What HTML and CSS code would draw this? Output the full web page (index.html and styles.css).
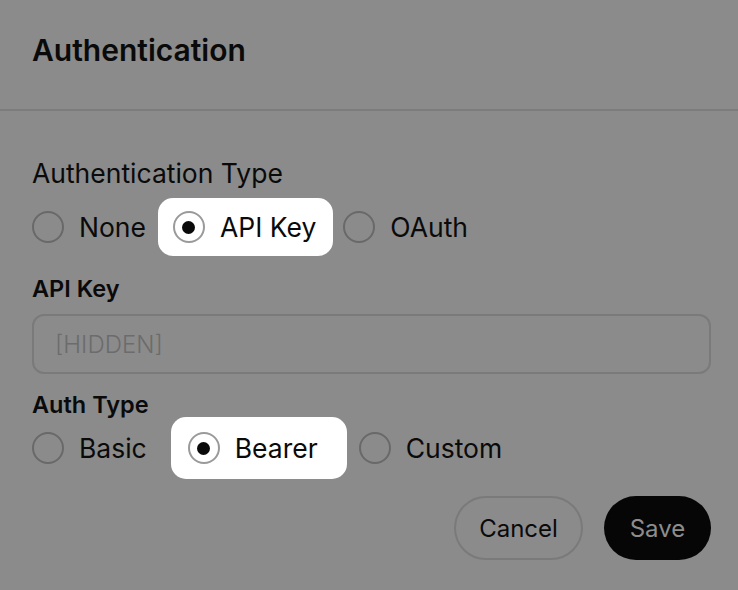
FILE: index.html
```html
<!DOCTYPE html>
<html>
<head>
<meta charset="utf-8">
<link rel="stylesheet" href="styles.css">
</head>
<body>
<div class="dialog">
  <header class="head">
    <h1 class="title">Authentication</h1>
  </header>
  <main class="body">
    <div class="section-label">Authentication Type</div>
    <div class="radio-row row1">
      <label class="opt"><span class="circle"></span><span class="txt">None</span></label>
      <label class="opt selected"><span class="circle"><span class="dot"></span></span><span class="txt">API Key</span></label>
      <label class="opt"><span class="circle"></span><span class="txt">OAuth</span></label>
    </div>
    <div class="field-label">API Key</div>
    <div class="input"><span class="placeholder">[HIDDEN]</span></div>
    <div class="field-label second">Auth Type</div>
    <div class="radio-row row2">
      <label class="opt"><span class="circle"></span><span class="txt">Basic</span></label>
      <label class="opt selected"><span class="circle"><span class="dot"></span></span><span class="txt">Bearer</span></label>
      <label class="opt"><span class="circle"></span><span class="txt">Custom</span></label>
    </div>
    <div class="actions">
      <button class="btn cancel">Cancel</button>
      <button class="btn save">Save</button>
    </div>
  </main>
</div>
</body>
</html>
```
FILE: styles.css
```css
* { box-sizing: border-box; }
html, body {
  margin: 0;
  padding: 0;
  background: #8b8b8b;
  font-family: Inter, "Noto Sans", sans-serif;
  color: #0a0a0a;
}
.dialog {
  width: 738px;
  height: 590px;
  overflow: hidden;
}
.head {
  height: 111px;
  border-bottom: 2px solid #7c7c7c;
  padding: 31px 32px 0;
}
.title {
  margin: 0;
  font-size: 30px;
  font-weight: 600;
  line-height: 38px;
  letter-spacing: 0;
}
.body {
  padding: 0 27px 0 32px;
}
.section-label {
  margin-top: 47px;
  font-size: 26.5px;
  line-height: 30px;
}
.radio-row {
  display: flex;
  align-items: center;
  height: 58px;
  margin-top: 10px;
}
.row1 { gap: 27px; }
.row2 { gap: 41px; margin-top: -3px; height: 62px; }
.opt {
  display: flex;
  align-items: center;
  gap: 15px;
  font-size: 26.5px;
  height: 58px;
}
.row2 .opt { height: 62px; }
.opt.selected {
  background: #ffffff;
  border-radius: 15px;
  padding: 0 17px 0 15px;
  margin: 0 -17px 0 -15px;
}
.row2 .opt.selected {
  padding: 0 29px 0 17px;
  margin: 0 -29px 0 -17px;
}
.circle {
  width: 32px;
  height: 32px;
  border-radius: 50%;
  border: 2px solid #696969;
  display: flex;
  align-items: center;
  justify-content: center;
  flex: none;
}
.selected .circle { border-color: #9a9a9a; }
.dot {
  width: 13px;
  height: 13px;
  border-radius: 50%;
  background: #0a0a0a;
}
.field-label {
  margin-top: 18px;
  font-size: 23.5px;
  font-weight: 600;
  line-height: 30px;
}
.field-label.second { margin-top: 16px; }
.input {
  margin-top: 10px;
  height: 60px;
  border: 2px solid #7a7a7a;
  border-radius: 12px;
  display: flex;
  align-items: center;
  padding-left: 21px;
}
.placeholder {
  font-size: 24px;
  font-weight: 300;
  color: #6c6c6c;
}
.actions {
  display: flex;
  justify-content: flex-end;
  gap: 21px;
  margin-top: 17px;
}
.btn {
  font-family: inherit;
  font-size: 24px;
  height: 64px;
  border-radius: 32px;
  padding: 0;
}
.cancel {
  width: 129px;
  background: transparent;
  border: 2px solid #7a7a7a;
  color: #0a0a0a;
}
.save {
  width: 107px;
  background: #060606;
  border: none;
  color: #8d8d8d;
}
```
